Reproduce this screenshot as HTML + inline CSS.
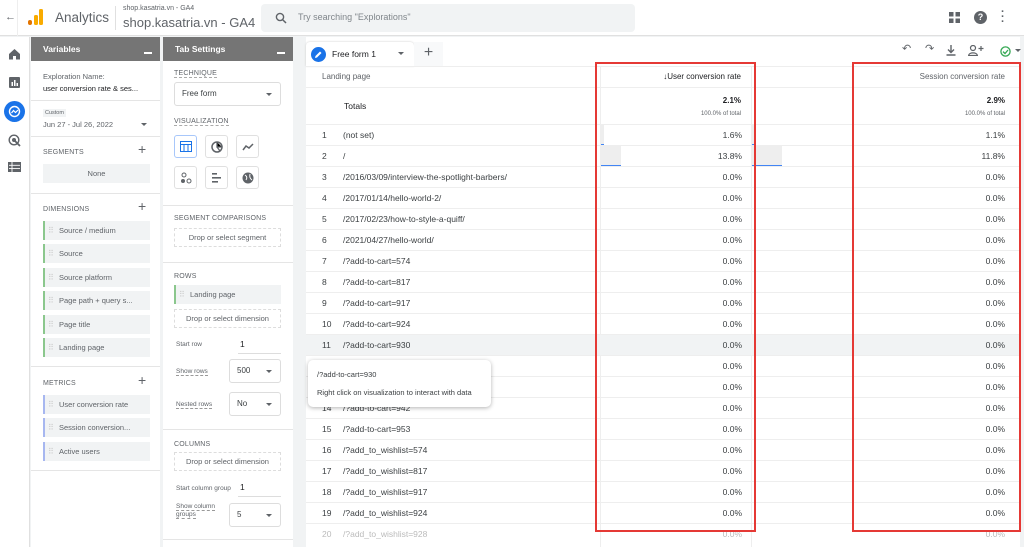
<!DOCTYPE html>
<html><head><meta charset="utf-8"><style>
*{box-sizing:border-box;margin:0;padding:0}
body{width:1024px;height:547px;overflow:hidden;background:#f1f3f4;font-family:"Liberation Sans",Arial,sans-serif;color:#3c4043;position:relative}
.a{position:absolute}
.top{left:0;top:0;width:1024px;height:36px;background:#fff;border-bottom:1px solid #e0e0e0}
.side{left:0;top:37px;width:30px;height:510px;background:#fff;border-right:1px solid #e0e0e0}
.panel{background:#fff}
.ph{background:#757575;color:#fff;font-size:8.5px;font-weight:bold;height:24px;line-height:24px;padding-left:12px}
.ph:after{content:"";position:absolute;right:8px;top:15px;width:8px;height:1.5px;background:#fff}
.lab{font-size:7px;color:#5f6368;letter-spacing:.2px}
.chip{position:absolute;left:12px;width:107px;height:19px;background:#f1f3f4;border-left:2px solid #8bc78d;font-size:7.5px;color:#5f6368;line-height:19px;padding-left:14px}
.chip:before{content:"⠿";position:absolute;left:3px;color:#ccc;font-size:8px}
.chip.m{border-left-color:#a7b7f0}
.drop{position:absolute;left:12px;width:107px;height:19px;border:1px dashed #ddd;font-size:7.5px;color:#5f6368;text-align:center;line-height:17px}
.sel{position:absolute;border:1px solid #ddd;border-radius:3px;height:24px;font-size:8px;line-height:22px;padding-left:7px;background:#fff}
.sel:after{content:"";position:absolute;right:8px;top:10px;border:3px solid transparent;border-top:3.5px solid #5f6368}
.hr{position:absolute;left:0;height:1px;background:#e5e5e5}
.vb{position:absolute;width:23px;height:23px;border:1px solid #e0e0e0;border-radius:3px}
.row{position:absolute;left:306px;width:714px;height:21px;border-bottom:1px solid #eee;font-size:8.5px;color:#3c4043;line-height:21px}
.row .n{position:absolute;left:16px}
.row .p{position:absolute;left:37px}
.row .u{position:absolute;right:278px}
.row .s{position:absolute;right:15px}
.red{position:absolute;border:2px solid #e53935}
</style></head><body>
<div class="a top">
 <div class="a" style="left:5px;top:11px;font-size:11px;color:#5f6368">←</div>
 <div class="a" style="left:17px;top:0;width:1px;height:36px;background:#eee"></div>
 <svg class="a" style="left:28px;top:9px" width="16" height="17"><rect x="0" y="11" width="4" height="5" rx="2" fill="#e37400"/><rect x="6" y="6" width="4" height="10" rx="1.5" fill="#f9ab00"/><rect x="11" y="0" width="4" height="16" rx="1.5" fill="#f9ab00"/></svg>
 <div class="a" style="left:55px;top:10px;font-size:13.5px;color:#5f6368">Analytics</div>
 <div class="a" style="left:115px;top:6px;width:1px;height:24px;background:#e0e0e0"></div>
 <div class="a" style="left:123px;top:5px;font-size:7px;color:#5f6368">shop.kasatria.vn - GA4</div>
 <div class="a" style="left:123px;top:15px;font-size:13px;color:#5f6368">shop.kasatria.vn - GA4</div>
 <div class="a" style="left:261px;top:4px;width:374px;height:28px;background:#f1f3f4;border-radius:4px"></div>
 <svg class="a" style="left:275px;top:12px" width="12" height="12"><circle cx="5" cy="5" r="3.6" stroke="#5f6368" stroke-width="1.4" fill="none"/><path d="M7.6 7.6L11 11" stroke="#5f6368" stroke-width="1.5"/></svg>
 <div class="a" style="left:298px;top:12px;font-size:9px;color:#80868b">Try searching "Explorations"</div>
 <svg class="a" style="left:949px;top:12px" width="11" height="11" fill="#5f6368"><rect width="4.5" height="4.5"/><rect x="6.5" width="4.5" height="4.5"/><rect y="6.5" width="4.5" height="4.5"/><rect x="6.5" y="6.5" width="4.5" height="4.5"/></svg>
 <div class="a" style="left:974px;top:11px;width:13px;height:13px;border-radius:50%;background:#5f6368;color:#fff;font-size:9px;font-weight:bold;text-align:center;line-height:13px">?</div>
 <div class="a" style="left:1001px;top:10px;font-size:11px;color:#5f6368;font-weight:bold;line-height:5px">·<br>·<br>·</div>
</div>
<div class="a side">
 <svg class="a" style="left:8px;top:11px" width="13" height="12"><path d="M1 6L6.5 1 12 6V11.5H8V8H5v3.5H1z" fill="#5f6368"/></svg>
 <svg class="a" style="left:9px;top:40px" width="11" height="11"><rect width="11" height="11" rx="1" fill="#5f6368"/><rect x="2.5" y="5" width="1.5" height="4" fill="#fff"/><rect x="5" y="3" width="1.5" height="6" fill="#fff"/><rect x="7.5" y="6" width="1.5" height="3" fill="#fff"/></svg>
 <div class="a" style="left:4px;top:64px;width:21px;height:21px;border-radius:50%;background:#1a73e8"></div>
 <svg class="a" style="left:8px;top:68px" width="13" height="13"><circle cx="6.5" cy="6.5" r="5" stroke="#fff" stroke-width="1.4" fill="none"/><path d="M3.5 8L5.5 5.5 7.5 7.5 10 5" stroke="#fff" stroke-width="1.2" fill="none"/></svg>
 <svg class="a" style="left:8px;top:97px" width="13" height="13"><circle cx="6" cy="6" r="4.8" stroke="#5f6368" stroke-width="1.4" fill="none"/><circle cx="6" cy="6" r="2" fill="#5f6368"/><path d="M7 7L12 12" stroke="#5f6368" stroke-width="1.8"/></svg>
 <svg class="a" style="left:8px;top:125px" width="13" height="10"><rect width="13" height="10" fill="#5f6368"/><path d="M1 3.3H12M1 6.6H12M4 0V10" stroke="#fff" stroke-width=".9"/></svg>
</div>
<div class="a panel" style="left:31px;top:37px;width:129px;height:510px">
 <div class="ph" style="position:relative">Variables</div>
 <div class="a" style="left:12px;top:35px;font-size:7.5px;color:#5f6368">Exploration Name:</div>
 <div class="a" style="left:12px;top:47px;font-size:7.5px;color:#202124">user conversion rate &amp; ses...</div>
 <div class="hr" style="top:63px;width:129px"></div>
 <div class="a" style="left:12px;top:72px;font-size:5.5px;background:#f1f3f4;padding:1px 2px;color:#5f6368">Custom</div>
 <div class="a" style="left:12px;top:83px;font-size:7.5px;color:#5f6368">Jun 27 - Jul 26, 2022</div>
 <div class="a" style="left:110px;top:86px;border:3px solid transparent;border-top:3.5px solid #5f6368"></div>
 <div class="hr" style="top:99px;width:129px"></div>
 <div class="a lab" style="left:12px;top:112px">SEGMENTS</div><div class="a" style="left:107px;top:104px;font-size:14px;color:#5f6368">+</div>
 <div class="a" style="left:12px;top:127px;width:107px;height:19px;background:#f1f3f4;font-size:7.5px;color:#5f6368;text-align:center;line-height:19px">None</div>
 <div class="hr" style="top:156px;width:129px"></div>
 <div class="a lab" style="left:12px;top:169px">DIMENSIONS</div><div class="a" style="left:107px;top:161px;font-size:14px;color:#5f6368">+</div>
 <div class="chip" style="top:184px">Source / medium</div>
 <div class="chip" style="top:207px">Source</div>
 <div class="chip" style="top:231px">Source platform</div>
 <div class="chip" style="top:254px">Page path + query s...</div>
 <div class="chip" style="top:278px">Page title</div>
 <div class="chip" style="top:301px">Landing page</div>
 <div class="hr" style="top:329px;width:129px"></div>
 <div class="a lab" style="left:12px;top:343px">METRICS</div><div class="a" style="left:107px;top:335px;font-size:14px;color:#5f6368">+</div>
 <div class="chip m" style="top:358px">User conversion rate</div>
 <div class="chip m" style="top:381px">Session conversion...</div>
 <div class="chip m" style="top:405px">Active users</div>
 <div class="hr" style="top:433px;width:129px"></div>
</div>
<div class="a panel" style="left:163px;top:37px;width:130px;height:510px">
 <div class="ph" style="position:relative">Tab Settings</div>
 <div class="a lab" style="left:11px;top:33px;border-bottom:1px dashed #aaa">TECHNIQUE</div>
 <div class="sel" style="left:11px;top:45px;width:107px">Free form</div>
 <div class="a lab" style="left:11px;top:81px;border-bottom:1px dashed #aaa">VISUALIZATION</div>
 <div class="vb" style="left:11px;top:98px;border-color:#a8c7fa"><svg style="margin:5px" width="12" height="11"><rect x=".5" y=".5" width="11" height="10" stroke="#1a73e8" fill="none"/><path d="M.5 3.5H11.5M4 3.5V10.5M8 3.5V10.5" stroke="#1a73e8"/></svg></div>
 <div class="vb" style="left:42px;top:98px"><svg style="margin:5px" width="12" height="12"><circle cx="6" cy="6" r="5" stroke="#5f6368" stroke-width="1.5" fill="none"/><path d="M6 1V6H11M6 6L9 10" stroke="#5f6368" stroke-width="1.3"/></svg></div>
 <div class="vb" style="left:73px;top:98px"><svg style="margin:6px 5px" width="12" height="10"><path d="M1 8L4 4 7 6 11 2" stroke="#5f6368" stroke-width="1.5" fill="none"/></svg></div>
 <div class="vb" style="left:11px;top:129px"><svg style="margin:5px" width="12" height="12"><circle cx="4" cy="3" r="2" stroke="#5f6368" fill="none"/><circle cx="3" cy="9" r="2" fill="#5f6368"/><circle cx="9" cy="9" r="2" stroke="#5f6368" fill="none"/></svg></div>
 <div class="vb" style="left:42px;top:129px"><svg style="margin:6px" width="11" height="10" fill="#5f6368"><rect width="5" height="1.6"/><rect y="4" width="9" height="1.6"/><rect y="8" width="6" height="1.6"/></svg></div>
 <div class="vb" style="left:73px;top:129px"><svg style="margin:5px" width="12" height="12"><circle cx="6" cy="6" r="5.5" fill="#5f6368"/><path d="M3 3Q6 5 4 8M8 2Q7 6 10 8" stroke="#fff" fill="none"/></svg></div>
 <div class="hr" style="top:168px;width:130px"></div>
 <div class="a lab" style="left:11px;top:178px">SEGMENT COMPARISONS</div>
 <div class="drop" style="top:191px;left:11px">Drop or select segment</div>
 <div class="hr" style="top:225px;width:130px"></div>
 <div class="a lab" style="left:11px;top:236px">ROWS</div>
 <div class="chip" style="top:248px;left:11px">Landing page</div>
 <div class="drop" style="top:272px;left:11px">Drop or select dimension</div>
 <div class="a" style="left:13px;top:304px;font-size:6.5px;color:#5f6368">Start row</div>
 <div class="a" style="left:77px;top:302px;font-size:8.5px;color:#202124">1</div>
 <div class="a" style="left:75px;top:316px;width:43px;height:1px;background:#ddd"></div>
 <div class="a" style="left:13px;top:331px;font-size:6.5px;color:#5f6368;border-bottom:1px dashed #999">Show rows</div>
 <div class="sel" style="left:66px;top:322px;width:52px">500</div>
 <div class="a" style="left:13px;top:364px;font-size:6.5px;color:#5f6368;border-bottom:1px dashed #999">Nested rows</div>
 <div class="sel" style="left:66px;top:355px;width:52px">No</div>
 <div class="hr" style="top:392px;width:130px"></div>
 <div class="a lab" style="left:11px;top:404px">COLUMNS</div>
 <div class="drop" style="top:415px;left:11px">Drop or select dimension</div>
 <div class="a" style="left:13px;top:448px;font-size:6.5px;color:#5f6368">Start column group</div>
 <div class="a" style="left:77px;top:445px;font-size:8.5px;color:#202124">1</div>
 <div class="a" style="left:75px;top:459px;width:43px;height:1px;background:#ddd"></div>
 <div class="a" style="left:13px;top:466px;font-size:6.5px;color:#5f6368;line-height:8px;width:40px"><span style="border-bottom:1px dashed #999">Show column</span><br><span style="border-bottom:1px dashed #999">groups</span></div>
 <div class="sel" style="left:66px;top:466px;width:52px">5</div>
 <div class="hr" style="top:502px;width:130px"></div>
</div>
<div class="a" style="left:306px;top:37px;width:714px;height:510px;background:#fff"></div>
<div class="a" style="left:306px;top:42px;width:108px;height:24px;background:#fff;border-radius:4px 4px 0 0;box-shadow:0 0 2px #ccc"></div>
<div class="a" style="left:311px;top:47px;width:15px;height:15px;border-radius:50%;background:#1a73e8"></div>
<svg class="a" style="left:314px;top:50px" width="9" height="9"><path d="M1 8L1.5 6 6 1.5 7.5 3 3 7.5z" fill="#fff"/></svg>
<div class="a" style="left:332px;top:49px;font-size:8.5px;color:#202124">Free form 1</div>
<div class="a" style="left:398px;top:52px;border:3px solid transparent;border-top:3.5px solid #5f6368"></div>
<div class="a" style="left:414px;top:42px;width:29px;height:24px;background:#f8f9fa;font-size:16px;color:#5f6368;text-align:center;line-height:22px">+</div>
<div class="a" style="left:306px;top:66px;width:714px;height:1px;background:#eee"></div>
<div class="a" style="left:902px;top:42px;font-size:11px;color:#5f6368">↶</div>
<div class="a" style="left:925px;top:42px;font-size:11px;color:#5f6368">↷</div>
<svg class="a" style="left:946px;top:45px" width="10" height="11"><path d="M5 0V7M2 4.5L5 7.5 8 4.5M0.5 10H9.5" stroke="#5f6368" stroke-width="1.4" fill="none"/></svg>
<svg class="a" style="left:968px;top:45px" width="16" height="11"><circle cx="5" cy="3" r="2.5" stroke="#5f6368" stroke-width="1.2" fill="none"/><path d="M0.6 10.5C1 7 9 7 9.4 10.5Z" stroke="#5f6368" stroke-width="1.2" fill="none"/><path d="M13 1V6M10.5 3.5H15.5" stroke="#5f6368" stroke-width="1.2"/></svg>
<svg class="a" style="left:1000px;top:46px" width="11" height="11"><circle cx="5.5" cy="5.5" r="4.6" stroke="#34a853" stroke-width="1.3" fill="none"/><path d="M3 5.6L5 7.5 8 4" stroke="#34a853" stroke-width="1.3" fill="none"/></svg>
<div class="a" style="left:1015px;top:49px;border:3px solid transparent;border-top:3.5px solid #5f6368"></div>
<div class="a" style="left:322px;top:72px;font-size:8px;color:#5f6368">Landing page</div>
<div class="a" style="left:600px;top:66px;width:1px;height:481px;background:#eee"></div>
<div class="a" style="left:751px;top:66px;width:1px;height:481px;background:#eee"></div>
<div class="a" style="right:283px;top:72px;font-size:8px;color:#202124">↓User conversion rate</div>
<div class="a" style="right:19px;top:72px;font-size:8px;color:#5f6368">Session conversion rate</div>
<div class="a" style="left:306px;top:87px;width:714px;height:1px;background:#eee"></div>
<div class="a" style="left:344px;top:101px;font-size:8.5px;color:#202124">Totals</div>
<div class="a" style="right:283px;top:96px;font-size:8px;color:#202124;font-weight:bold">2.1%</div>
<div class="a" style="right:283px;top:111px;font-size:6px;color:#5f6368">100.0% of total</div>
<div class="a" style="right:19px;top:96px;font-size:8px;color:#202124;font-weight:bold">2.9%</div>
<div class="a" style="right:19px;top:111px;font-size:6px;color:#5f6368">100.0% of total</div>
<div class="a" style="left:306px;top:124px;width:714px;height:1px;background:#eee"></div>
<div class="a" style="left:601px;top:125px;width:3px;height:20px;background:#eee;border-bottom:1px solid #4285f4"></div>
<div class="a" style="left:752px;top:125px;width:2px;height:20px;background:#eee;border-bottom:1px solid #4285f4"></div>
<div class="a" style="left:601px;top:146px;width:20px;height:20px;background:#eee;border-bottom:1.5px solid #4285f4"></div>
<div class="a" style="left:752px;top:146px;width:30px;height:20px;background:#eee;border-bottom:1.5px solid #4285f4"></div>
<div class="row" style="top:125px"><span class="n">1</span><span class="p">(not set)</span><span class="u">1.6%</span><span class="s">1.1%</span></div>
<div class="row" style="top:146px"><span class="n">2</span><span class="p">/</span><span class="u">13.8%</span><span class="s">11.8%</span></div>
<div class="row" style="top:167px"><span class="n">3</span><span class="p">/2016/03/09/interview-the-spotlight-barbers/</span><span class="u">0.0%</span><span class="s">0.0%</span></div>
<div class="row" style="top:188px"><span class="n">4</span><span class="p">/2017/01/14/hello-world-2/</span><span class="u">0.0%</span><span class="s">0.0%</span></div>
<div class="row" style="top:209px"><span class="n">5</span><span class="p">/2017/02/23/how-to-style-a-quiff/</span><span class="u">0.0%</span><span class="s">0.0%</span></div>
<div class="row" style="top:230px"><span class="n">6</span><span class="p">/2021/04/27/hello-world/</span><span class="u">0.0%</span><span class="s">0.0%</span></div>
<div class="row" style="top:251px"><span class="n">7</span><span class="p">/?add-to-cart=574</span><span class="u">0.0%</span><span class="s">0.0%</span></div>
<div class="row" style="top:272px"><span class="n">8</span><span class="p">/?add-to-cart=817</span><span class="u">0.0%</span><span class="s">0.0%</span></div>
<div class="row" style="top:293px"><span class="n">9</span><span class="p">/?add-to-cart=917</span><span class="u">0.0%</span><span class="s">0.0%</span></div>
<div class="row" style="top:314px"><span class="n">10</span><span class="p">/?add-to-cart=924</span><span class="u">0.0%</span><span class="s">0.0%</span></div>
<div class="row" style="top:335px;background:#f1f3f4"><span class="n">11</span><span class="p">/?add-to-cart=930</span><span class="u">0.0%</span><span class="s">0.0%</span></div>
<div class="row" style="top:356px"><span class="n">12</span><span class="p">/?add-to-cart=935</span><span class="u">0.0%</span><span class="s">0.0%</span></div>
<div class="row" style="top:377px"><span class="n">13</span><span class="p">/?add-to-cart=940</span><span class="u">0.0%</span><span class="s">0.0%</span></div>
<div class="row" style="top:398px"><span class="n">14</span><span class="p">/?add-to-cart=942</span><span class="u">0.0%</span><span class="s">0.0%</span></div>
<div class="row" style="top:419px"><span class="n">15</span><span class="p">/?add-to-cart=953</span><span class="u">0.0%</span><span class="s">0.0%</span></div>
<div class="row" style="top:440px"><span class="n">16</span><span class="p">/?add_to_wishlist=574</span><span class="u">0.0%</span><span class="s">0.0%</span></div>
<div class="row" style="top:461px"><span class="n">17</span><span class="p">/?add_to_wishlist=817</span><span class="u">0.0%</span><span class="s">0.0%</span></div>
<div class="row" style="top:482px"><span class="n">18</span><span class="p">/?add_to_wishlist=917</span><span class="u">0.0%</span><span class="s">0.0%</span></div>
<div class="row" style="top:503px"><span class="n">19</span><span class="p">/?add_to_wishlist=924</span><span class="u">0.0%</span><span class="s">0.0%</span></div>
<div class="row" style="top:524px;color:#bbb;border:none"><span class="n">20</span><span class="p">/?add_to_wishlist=928</span><span class="u">0.0%</span><span class="s">0.0%</span></div>
<div class="a" style="left:308px;top:360px;width:183px;height:47px;background:#fff;border-radius:5px;box-shadow:0 1px 4px rgba(0,0,0,.3)">
 <div class="a" style="left:9px;top:10px;font-size:7.5px;color:#3c4043">/?add-to-cart=930</div>
 <div class="a" style="left:9px;top:28px;font-size:7.5px;color:#3c4043">Right click on visualization to interact with data</div>
</div>
<div class="red" style="left:595px;top:62px;width:161px;height:470px"></div>
<div class="red" style="left:852px;top:62px;width:169px;height:470px"></div>
</body></html>
